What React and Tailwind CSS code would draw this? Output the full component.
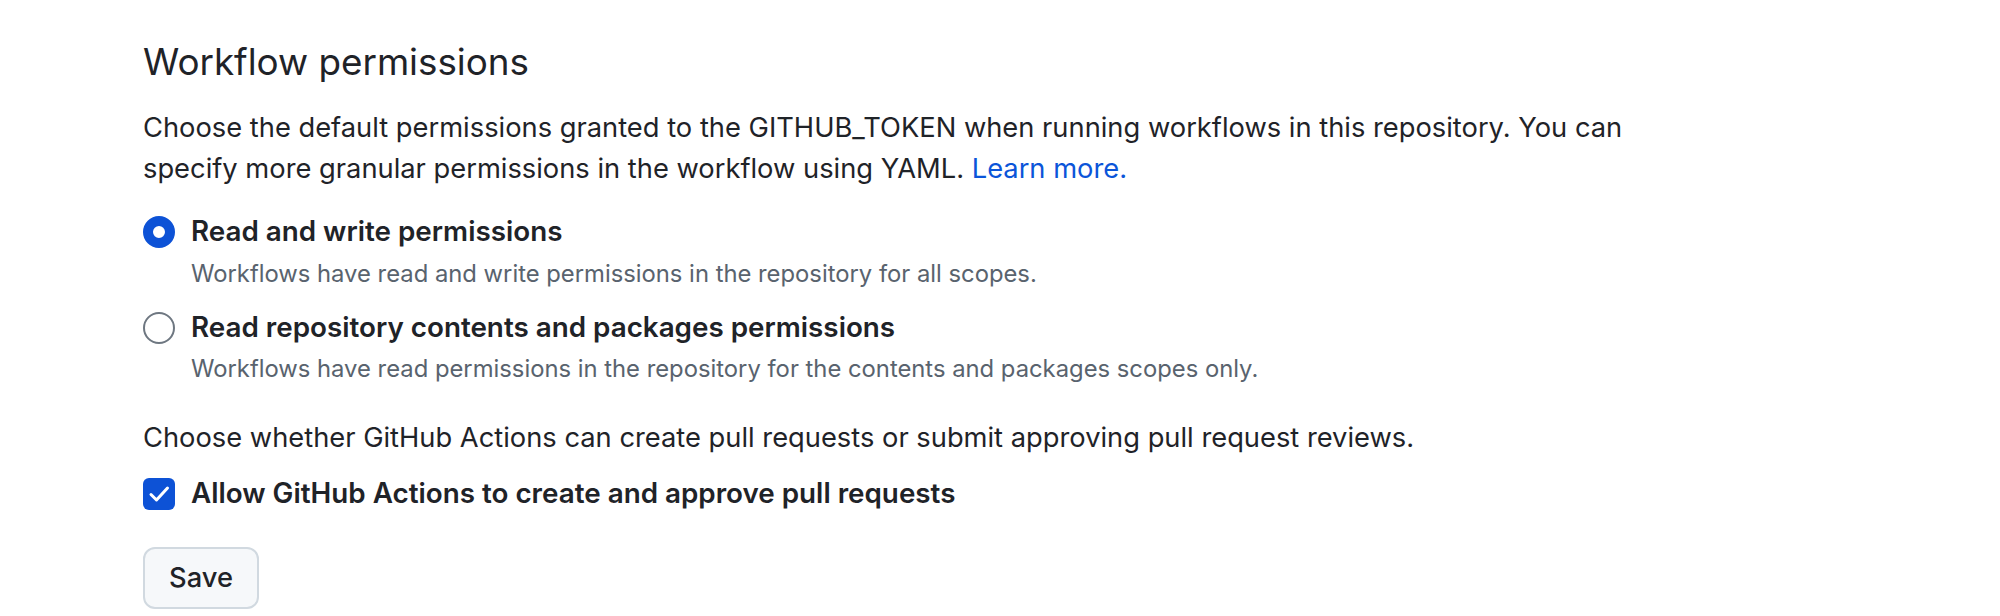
import React from "react";

export default function App() {
  const font = { fontFamily: "Inter, 'Noto Sans', sans-serif" };
  return (
    <div className="w-[2000px] h-[616px] bg-white overflow-hidden" style={font}>
      <div className="pl-[143px] pt-[37px] flex flex-col items-start text-[#1f2328]">
        <h2 className="text-[36.8px] leading-[49px] font-normal">Workflow permissions</h2>
        <p className="mt-[21px] text-[27.3px] leading-[41px] w-[1520px]">
          Choose the default permissions granted to the GITHUB_TOKEN when running workflows in this repository. You can
          <br />
          specify more granular permissions in the workflow using YAML.{" "}
          <a className="text-[#0b55d9]" href="#">Learn more.</a>
        </p>

        <div className="mt-[22px] flex flex-col">
          <div className="flex items-center gap-[16px]">
            <span className="w-[32px] h-[32px] rounded-full border-[10px] border-[#0d52d6] bg-white shrink-0" />
            <span className="text-[27.8px] leading-[41px] font-semibold">Read and write permissions</span>
          </div>
          <div className="pl-[48px] mt-[4px] text-[23.8px] leading-[35px] text-[#59636e]">
            Workflows have read and write permissions in the repository for all scopes.
          </div>

          <div className="mt-[16px] flex items-center gap-[16px]">
            <span className="w-[32px] h-[32px] rounded-full border-2 border-[#6e7781] bg-white shrink-0" />
            <span className="text-[27.8px] leading-[41px] font-semibold">Read repository contents and packages permissions</span>
          </div>
          <div className="pl-[48px] mt-[3px] text-[23.8px] leading-[35px] text-[#59636e]">
            Workflows have read permissions in the repository for the contents and packages scopes only.
          </div>
        </div>

        <p className="mt-[31px] text-[27.3px] leading-[41px]">
          Choose whether GitHub Actions can create pull requests or submit approving pull request reviews.
        </p>

        <div className="mt-[15px] flex items-center gap-[16px]">
          <span className="w-[32px] h-[32px] rounded-[6px] bg-[#0d52d6] flex items-center justify-center shrink-0">
            <svg width="32" height="32" viewBox="0 0 32 32" fill="none">
              <path d="M8 16.5 L13.5 22 L24.5 10" stroke="white" strokeWidth="3" strokeLinecap="round" strokeLinejoin="round" />
            </svg>
          </span>
          <span className="text-[27.8px] leading-[41px] font-semibold">Allow GitHub Actions to create and approve pull requests</span>
        </div>

        <button className="mt-[33px] w-[116px] h-[62px] rounded-[12px] border-2 border-[#d1d9e0] bg-[#f6f8fa] text-[27.3px] font-medium text-[#1f2328]">
          Save
        </button>
      </div>
    </div>
  );
}
